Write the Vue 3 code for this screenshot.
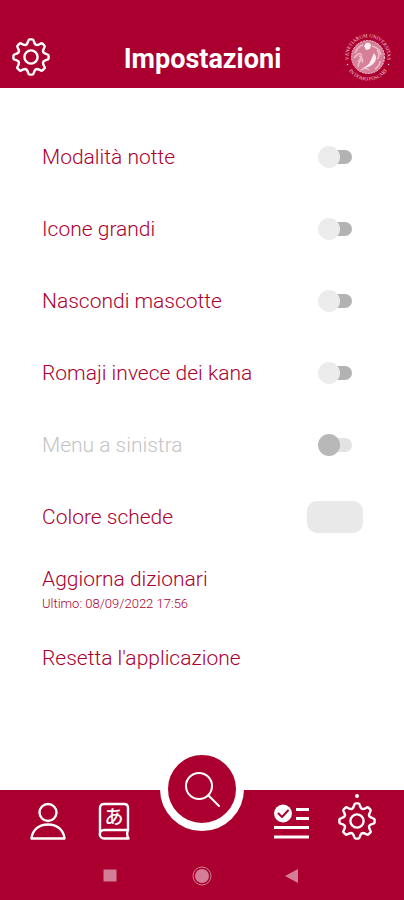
<script setup>
import { ref } from 'vue'

const options = ref([
  { id: 'night', label: 'Modalità notte', on: false, disabled: false },
  { id: 'large', label: 'Icone grandi', on: false, disabled: false },
  { id: 'mascot', label: 'Nascondi mascotte', on: false, disabled: false },
  { id: 'romaji', label: 'Romaji invece dei kana', on: false, disabled: false },
  { id: 'left', label: 'Menu a sinistra', on: false, disabled: true },
])

// Outline of a gear with eight rounded teeth, centred on 0,0.
function gearPath() {
  const tooth = [
    [-4.6, -12.4], [-3.4, -13.6], [-2.9, -15.6], [-2.5, -17.6], [-1.4, -17.6],
    [1.4, -17.6], [2.5, -17.6], [2.9, -15.6], [3.4, -13.6], [4.6, -12.4],
  ]
  let d = ''
  for (let k = 0; k < 8; k++) {
    const a = (k * Math.PI) / 4
    const p = tooth.map(([x, y]) =>
      (x * Math.cos(a) - y * Math.sin(a)).toFixed(2) + ' ' + (x * Math.sin(a) + y * Math.cos(a)).toFixed(2))
    d += `${k ? 'L' : 'M'}${p[0]}Q${p[1]} ${p[2]}Q${p[3]} ${p[4]}L${p[5]}Q${p[6]} ${p[7]}Q${p[8]} ${p[9]}`
  }
  return d + 'Z'
}
const gear = gearPath()
</script>

<template>
  <div class="screen">
    <header class="top">
      <button class="plain" type="button" aria-label="Opzioni">
        <svg class="icon" viewBox="-20 -20 40 40"><path :d="gear" /><circle r="6.6" /></svg>
      </button>
      <h1>Impostazioni</h1>
      <svg class="seal" viewBox="-26 -26 52 52" role="img" aria-label="Università">
        <defs>
          <path id="arc-top" d="M-18.5 6A19.5 19.5 0 1 1 18.5 6" />
          <path id="arc-bottom" d="M-22 8.3A23.5 23.5 0 0 0 22 8.3" />
        </defs>
        <text><textPath href="#arc-top" startOffset="50%">VENETIARUM UNIVERSITAS</textPath></text>
        <text><textPath href="#arc-bottom" startOffset="50%">IN DOMO FOSCARI</textPath></text>
        <circle class="disc" r="16.5" />
        <circle class="rim" r="16.5" />
        <path class="relief" d="M-13 -4q3 -7 8 -8M-14 1q5 -6 7 -4t-3 8M-10 10q1 -7 5 -8M4 -11q8 2 9 9M9 -7q4 6 0 9M-7 13q5 -3 8 0M12 4q0 5 -5 8M-9 -1q5 2 3 7" />
        <path class="figure" d="M-2 -14q4 -1 5 2l-1 4 -4 1 -2 -4zM6 -4q4 5 0 10t-12 5q6 -2 8 -6t4 -9z" />
        <circle class="figure" cx="-20.5" cy="7.5" r=".7" /><circle class="figure" cx="20.5" cy="7.5" r=".7" />
      </svg>
    </header>

    <main>
      <label v-for="o in options" :key="o.id" class="row" :class="{ off: o.disabled }" :for="o.id">
        <span>{{ o.label }}</span>
        <input :id="o.id" v-model="o.on" class="switch" type="checkbox" role="switch" :disabled="o.disabled">
      </label>
      <div class="row">
        <span id="card-colour">Colore schede</span>
        <button class="swatch" type="button" aria-labelledby="card-colour"></button>
      </div>
      <button class="action" type="button">Aggiorna dizionari<small>Ultimo: 08/09/2022 17:56</small></button>
      <button class="action" type="button">Resetta l'applicazione</button>
    </main>

    <footer>
      <nav class="tabs">
        <a href="#profilo" aria-label="Profilo">
          <svg class="icon" viewBox="0 0 40 40"><circle cx="21" cy="11.5" r="8.5" /><path d="M4.5 37.5C5.5 28.5 12 23.5 21 23.5S36.5 28.5 37.5 37.5Z" /></svg>
        </a>
        <a href="#dizionario" aria-label="Dizionario">
          <svg class="icon" viewBox="0 0 40 40">
            <path d="M33 29H10a4.2 4.2 0 0 0 0 8.5h24.5q-2.5 -4 -.5 -8.5M6 33V7q0 -4 4 -4h20q4 0 4 4v22" />
            <text class="kana" x="20" y="23">あ</text>
          </svg>
        </a>
        <a class="search" href="#cerca" aria-label="Cerca">
          <svg class="icon thin" viewBox="0 0 40 40"><circle cx="17" cy="17" r="13" /><path d="M26.5 26.5L37 37" /></svg>
        </a>
        <a href="#esercizi" aria-label="Esercizi">
          <svg class="icon" viewBox="0 0 40 40">
            <path class="bars" d="M25 8.5H38M25 17.5H38M3 26.5H38M3 36H38" />
            <circle class="filled" cx="12" cy="12.5" r="9" />
            <path class="tick" d="M7.5 12.5l3.5 3.5 6 -6.5" />
          </svg>
        </a>
        <a class="current" href="#impostazioni" aria-label="Impostazioni" aria-current="page">
          <svg class="icon" viewBox="-20 -20 40 40"><path :d="gear" /><circle r="6.6" /></svg>
        </a>
      </nav>
      <div class="system">
        <button class="plain" type="button" aria-label="Recenti"><svg viewBox="0 0 20 20"><rect x="3.5" y="3.5" width="13" height="12" /></svg></button>
        <button class="plain" type="button" aria-label="Home"><svg viewBox="0 0 20 20"><circle cx="10" cy="10" r="7" /><circle class="ring" cx="10" cy="10" r="9" /></svg></button>
        <button class="plain" type="button" aria-label="Indietro"><svg viewBox="0 0 20 20"><path d="M1 10L14 3v14z" /></svg></button>
      </div>
    </footer>
  </div>
</template>

<style>
body { margin: 0; background: #fff; }
</style>

<style scoped>
* { box-sizing: border-box; }
.screen {
  --brand: #ab002f;
  min-height: 100vh;
  display: flex;
  flex-direction: column;
  background: #fff;
  color: var(--brand);
  font-family: Roboto, "Noto Sans CJK JP", sans-serif;
}
button { font: inherit; color: inherit; border: 0; cursor: pointer; }
.plain { padding: 0; background: none; display: flex; }
.icon {
  display: block;
  width: 40px;
  height: 40px;
  fill: none;
  stroke: #fff;
  stroke-width: 2.4;
  stroke-linejoin: round;
  stroke-linecap: round;
}
.thin { stroke-width: 2; }
.top {
  height: 88px;
  padding: 28px 10px 2px 11px;
  display: grid;
  grid-template-columns: 1fr auto 1fr;
  align-items: center;
  background: var(--brand);
  color: #fff;
}
h1 { margin: 0; padding-top: 4px; font-size: 27px; line-height: 32px; font-weight: 700; }
.seal { width: 52px; height: 52px; justify-self: end; }
.seal text { font: 5px "Liberation Serif", serif; fill: #f3ccd7; text-anchor: middle; }
.disc { fill: #d67f99; }
.rim { fill: none; stroke: #efc4d0; stroke-width: 1; stroke-dasharray: 2 1; }
.relief { fill: none; stroke: #ecbac8; stroke-width: 1.5; }
.figure { fill: #fbeef2; }

main {
  flex: 1;
  padding: 33px 41px 0 42px;
  display: flex;
  flex-direction: column;
  font-size: 21px;
  font-weight: 300;
  line-height: 24px;
}
.row { height: 72px; display: flex; align-items: center; justify-content: space-between; }
.off { color: #c4c4c4; }
.switch {
  appearance: none;
  position: relative;
  width: 34px;
  height: 22px;
  margin: 0 11px 0 0;
}
.switch::before,
.switch::after { content: ""; position: absolute; }
.switch::before {
  z-index: 1;
  left: 0;
  top: 0;
  width: 22px;
  height: 22px;
  border-radius: 50%;
  background: #ececec;
}
.switch::after {
  right: 0;
  top: 4px;
  width: 28px;
  height: 14px;
  border-radius: 7px;
  background: #b3b3b3;
}
.switch:checked::before { left: 12px; background: var(--brand); }
.switch:disabled::before { background: #b8b8b8; }
.switch:disabled::after { background: #e3e3e3; }
.swatch { width: 56px; height: 32px; border-radius: 10px; background: #e9e9e9; }
.action {
  margin-top: 14px;
  padding: 0;
  background: none;
  text-align: left;
}
.action + .action { margin-top: 34px; }
.action small { display: block; padding-top: 5px; font-size: 13px; line-height: 16px; }

footer { background: var(--brand); }
.tabs { height: 62px; padding: 0 27px; display: flex; align-items: center; justify-content: space-between; }
.tabs a { position: relative; display: block; color: #fff; }
.tabs .search {
  flex: none;
  width: 84px;
  height: 84px;
  margin-top: -64px;
  border: 8px solid #fff;
  border-radius: 50%;
  display: grid;
  place-items: center;
  background: var(--brand);
}
.kana { font: 500 19px "Noto Sans CJK JP", sans-serif; fill: #fff; stroke: none; text-anchor: middle; }
.bars { stroke-width: 3; stroke-linecap: butt; }
.filled { fill: #fff; stroke: none; }
.tick { stroke: var(--brand); stroke-width: 2; }
.current::before {
  content: "";
  position: absolute;
  left: 18px;
  top: -7px;
  width: 4px;
  height: 4px;
  border-radius: 50%;
  background: #fff;
}
.system { height: 48px; padding: 0 100px; display: flex; align-items: center; justify-content: space-between; }
.system svg { display: block; width: 20px; height: 20px; fill: #d47d98; }
.system .ring { fill: none; stroke: #d47d98; stroke-width: 1; }
</style>
